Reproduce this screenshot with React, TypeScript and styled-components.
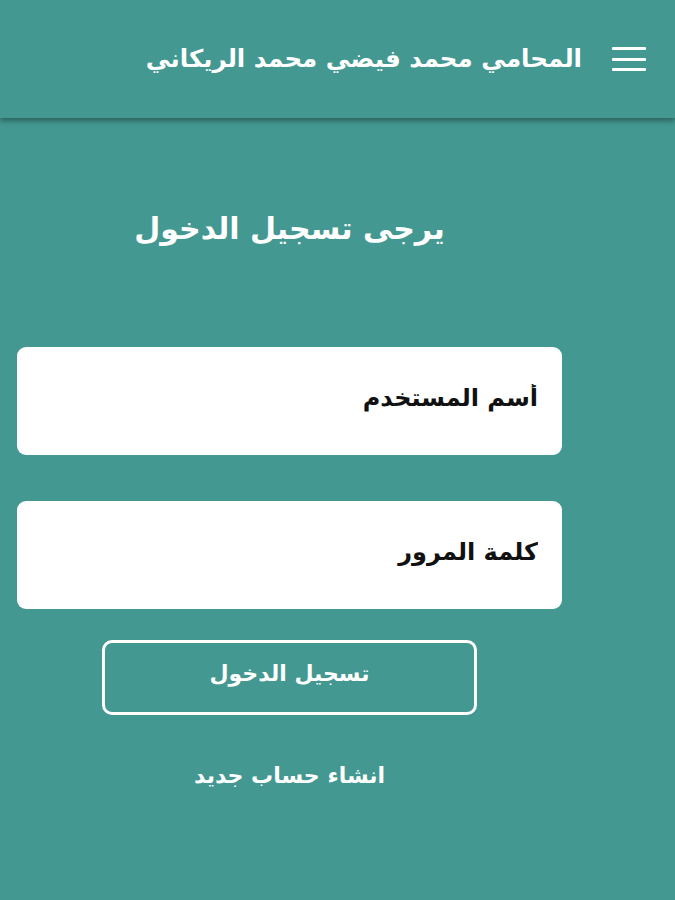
import React from "react";
import styled, { createGlobalStyle } from "styled-components";

const Global = createGlobalStyle`
  html, body { margin: 0; padding: 0; background: #439891; }
  body { font-family: "DejaVu Sans", "Noto Sans", sans-serif; }
  * { box-sizing: border-box; }
`;

const Page = styled.div`
  width: 675px;
  min-height: 900px;
  background: #439891;
  display: flex;
  flex-direction: column;
`;

const Header = styled.header`
  height: 118px;
  background: #439891;
  box-shadow: 0 3px 5px rgba(0, 0, 0, 0.35);
  display: flex;
  flex-direction: row-reverse;
  align-items: center;
  padding: 0 29px 0 0;
  gap: 30px;
  position: relative;
  z-index: 1;
`;

const Title = styled.h1`
  margin: 0;
  direction: rtl;
  color: #fff;
  font-size: 24.5px;
  font-weight: bold;
  line-height: 1;
`;

const MenuButton = styled.button`
  border: none;
  background: none;
  padding: 0;
  width: 34px;
  height: 24px;
  display: flex;
  flex-direction: column;
  justify-content: space-between;
`;

const MenuBar = styled.span`
  display: block;
  height: 3px;
  width: 34px;
  background: #fff;
  border-radius: 1px;
`;

const Main = styled.main`
  width: 545px;
  margin-left: 17px;
  display: flex;
  flex-direction: column;
  align-items: center;
  direction: rtl;
`;

const Heading = styled.h2`
  margin: 91px 0 0;
  color: #fff;
  font-size: 30px;
  font-weight: bold;
  line-height: 40px;
`;

const Field = styled.input<{ $mt: number }>`
  width: 100%;
  height: 108px;
  border: none;
  border-radius: 9px;
  background: #fff;
  padding: 0 24px 6px;
  font-family: "DejaVu Sans", sans-serif;
  font-size: 24px;
  font-weight: bold;
  direction: rtl;
  outline: none;
  margin-top: ${(p) => p.$mt}px;
  &::placeholder { color: #111; }
`;

const LoginButton = styled.button`
  margin-top: 31px;
  width: 375px;
  height: 75px;
  padding: 0 0 8px;
  border: 3px solid #fff;
  border-radius: 10px;
  background: transparent;
  color: #fff;
  font-family: "DejaVu Sans", sans-serif;
  font-size: 22px;
  font-weight: bold;
  direction: rtl;
`;

const RegisterLink = styled.a`
  margin-top: 48px;
  color: #fff;
  font-size: 22px;
  font-weight: bold;
  text-decoration: none;
`;

export default function App() {
  return (
    <>
      <Global />
      <Page>
        <Header>
          <MenuButton aria-label="menu">
            <MenuBar />
            <MenuBar />
            <MenuBar />
          </MenuButton>
          <Title>المحامي محمد فيضي محمد الريكاني</Title>
        </Header>
        <Main>
          <Heading>يرجى تسجيل الدخول</Heading>
          <Field $mt={98} placeholder="أسم المستخدم" />
          <Field $mt={46} type="password" placeholder="كلمة المرور" />
          <LoginButton>تسجيل الدخول</LoginButton>
          <RegisterLink href="#">انشاء حساب جديد</RegisterLink>
        </Main>
      </Page>
    </>
  );
}
